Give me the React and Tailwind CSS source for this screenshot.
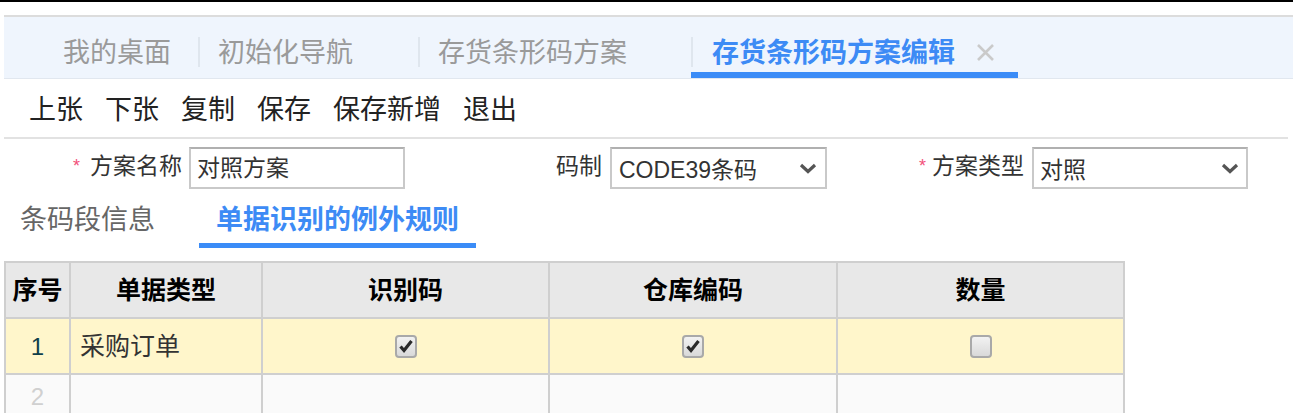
import React from 'react';

const font = { fontFamily: '"Liberation Sans", "Noto Sans CJK SC", sans-serif' };

function Sep() {
  return <div className="w-[2px] h-[30px] bg-[#dfe6ee] mt-[20px] shrink-0" />;
}

function Tab({ label, className }) {
  return (
    <div className={`h-full flex items-center pt-[17px] border-b-[6px] border-transparent text-[27px] leading-[27px] text-[#9a9a9a] ${className}`}>
      {label}
    </div>
  );
}

function Chevron() {
  return (
    <svg width="18" height="11" viewBox="0 0 18 11" className="shrink-0">
      <polyline points="2,2 9,8.5 16,2" fill="none" stroke="#555" strokeWidth="3.2" />
    </svg>
  );
}

function Check({ checked }) {
  return (
    <div className="mx-auto w-[22px] h-[23px] rounded-[4px] border-2 border-[#a9a9a9] bg-gradient-to-b from-[#f2f2f2] to-[#d9d9d9] flex items-center justify-center">
      {checked && (
        <svg width="16" height="16" viewBox="0 0 16 16">
          <polyline points="2.5,8.5 6,12.5 13.5,3" fill="none" stroke="#2a2a2a" strokeWidth="3.2" />
        </svg>
      )}
    </div>
  );
}

export default function App() {
  const cols = [65, 192, 287, 288, 287];

  return (
    <div className="w-[1293px] h-[413px] overflow-hidden bg-white" style={font}>
      <div className="h-[2px] bg-black" />
      <div className="h-[13px]" />

      {/* Top tabs */}
      <div className="ml-[4px] h-[64px] flex items-start bg-[#eff5fd] border-t-2 border-[#dcdcdc] border-b border-b-[#e1e7ef]">
        <Tab label="我的桌面" className="pl-[59px] pr-[27px]" />
        <Sep />
        <Tab label="初始化导航" className="pl-[18px] pr-[65px]" />
        <Sep />
        <Tab label="存货条形码方案" className="pl-[18px] pr-[64px]" />
        <div className="h-full flex border-b-[6px] border-[#3b8cf7]">
          <Sep />
          <div className="flex items-center pt-[17px] pl-[19px] pr-[23px]">
            <span className="text-[27px] leading-[27px] font-bold text-[#3d8bf5]">存货条形码方案编辑</span>
            <svg width="19" height="19" viewBox="0 0 19 19" className="ml-[21px] -mt-[2px]">
              <path d="M2 2L17 17M17 2L2 17" stroke="#cacaca" strokeWidth="2.6" />
            </svg>
          </div>
        </div>
      </div>

      {/* Toolbar */}
      <div className="ml-[4px] mr-[5px] h-[60px] flex items-center gap-[22px] pl-[25px] pt-[5px] border-b-2 border-[#e2e2e2] text-[27px] leading-[27px] text-[#222]">
        <span>上张</span>
        <span>下张</span>
        <span>复制</span>
        <span>保存</span>
        <span>保存新增</span>
        <span>退出</span>
      </div>

      {/* Form row */}
      <div className="mt-[8px] flex items-center h-[42px] text-[23px] leading-[23px] text-[#333]">
        <div className="w-[189px] flex justify-end items-center gap-[10px] pr-[7px] -mt-[4px]">
          <span className="text-[#f2507a] text-[18px]">*</span>
          <span>方案名称</span>
        </div>
        <div className="w-[216px] h-[42px] border-2 border-[#c9c9c9] border-t-[#b0b0b0] flex items-center pl-[6px]">
          对照方案
        </div>
        <div className="w-[205px] flex justify-end pr-[8px] -mt-[4px]">码制</div>
        <div className="w-[217px] h-[42px] border-2 border-[#c9c9c9] border-t-[#b0b0b0] flex items-center justify-between pl-[7px] pr-[8px]">
          <span className="mt-[4px]">CODE39条码</span>
          <Chevron />
        </div>
        <div className="w-[205px] flex justify-end items-center gap-[6px] pr-[8px] -mt-[4px]">
          <span className="text-[#f2507a] text-[18px]">*</span>
          <span>方案类型</span>
        </div>
        <div className="w-[216px] h-[42px] border-2 border-[#c9c9c9] border-t-[#b0b0b0] flex items-center justify-between pl-[6px] pr-[7px]">
          <span className="mt-[4px]">对照</span>
          <Chevron />
        </div>
      </div>

      {/* Sub tabs */}
      <div className="ml-[3px] flex gap-[27px] h-[59px] text-[27px] leading-[27px]">
        <div className="flex items-center pt-[9px] px-[17px] border-b-[5px] border-transparent text-[#666]">条码段信息</div>
        <div className="flex items-center pt-[9px] px-[17px] border-b-[5px] border-[#3b8cf7] font-bold text-[#3d8bf5]">单据识别的例外规则</div>
      </div>

      {/* Grid */}
      <table className="ml-[4px] mt-[13px] table-fixed border-collapse w-[1119px] text-[25px] leading-[25px]">
        <colgroup>
          {cols.map((w, i) => (
            <col key={i} style={{ width: w }} />
          ))}
        </colgroup>
        <thead>
          <tr className="h-[56px] bg-[#e8e8e8] font-bold text-black">
            {['序号', '单据类型', '识别码', '仓库编码', '数量'].map((h) => (
              <th key={h} className="border-2 border-[#cfcfcf] text-center font-bold">{h}</th>
            ))}
          </tr>
        </thead>
        <tbody>
          <tr className="h-[56px] bg-[#fff6cb] text-[#333]">
            <td className="border-2 border-[#cfcfcf] text-center text-[24px] text-[#0f3f4a]">1</td>
            <td className="border-2 border-[#cfcfcf] pl-[9px]">采购订单</td>
            <td className="border-2 border-[#cfcfcf]"><Check checked /></td>
            <td className="border-2 border-[#cfcfcf]"><Check checked /></td>
            <td className="border-2 border-[#cfcfcf]"><Check /></td>
          </tr>
          <tr className="h-[40px] bg-[#fafafa]">
            <td className="border-2 border-[#cfcfcf] text-center text-[24px] leading-[24px] text-[#d0d0d0] pt-[6px]">2</td>
            <td className="border-2 border-[#cfcfcf]" />
            <td className="border-2 border-[#cfcfcf]" />
            <td className="border-2 border-[#cfcfcf]" />
            <td className="border-2 border-[#cfcfcf]" />
          </tr>
        </tbody>
      </table>
    </div>
  );
}
